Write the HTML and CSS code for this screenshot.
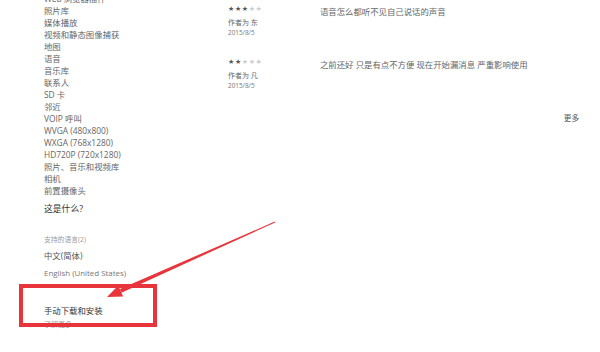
FILE: index.html
```html
<!DOCTYPE html>
<html lang="zh-CN">
<head>
<meta charset="utf-8">
<title>应用详情</title>
<link rel="stylesheet" href="styles.css">
</head>
<body>
<div class="page">
  <div class="left">
    <ul class="caps">
      <li>Web 浏览器插件</li>
      <li>照片库</li>
      <li>媒体播放</li>
      <li>视频和静态图像捕获</li>
      <li>地图</li>
      <li>语音</li>
      <li>音乐库</li>
      <li>联系人</li>
      <li>SD 卡</li>
      <li>邻近</li>
      <li>VOIP 呼叫</li>
      <li>WVGA (480x800)</li>
      <li>WXGA (768x1280)</li>
      <li>HD720P (720x1280)</li>
      <li>照片、音乐和视频库</li>
      <li>相机</li>
      <li>前置摄像头</li>
    </ul>
    <p class="what">这是什么?</p>
    <p class="lang-title">支持的语言(2)</p>
    <p class="lang">中文(简体)</p>
    <p class="lang en">English (United States)</p>
    <p class="manual">手动下载和安装</p>
    <p class="learn">了解更多</p>
  </div>
  <div class="reviews">
    <div class="review">
      <div class="meta">
        <div class="stars"><span class="on">★★★</span><span class="off">★★</span></div>
        <div class="author">作者为 东</div>
        <div class="date">2015/8/5</div>
      </div>
      <p class="text">语音怎么都听不见自己说话的声音</p>
    </div>
    <div class="review">
      <div class="meta">
        <div class="stars"><span class="on">★★</span><span class="off">★★★</span></div>
        <div class="author">作者为 凡</div>
        <div class="date">2015/8/5</div>
      </div>
      <p class="text">之前还好 只是有点不方便 现在开始漏消息 严重影响使用</p>
    </div>
    <div class="more">更多</div>
  </div>
</div>
<svg class="annot" width="600" height="352" viewBox="0 0 600 352">
  <polygon points="275.2,222.4 274.8,221.6 119.9,289.1 121.5,292.7" fill="#e8353b"/>
  <polygon points="107,297 118.3,285.4 123.1,296.4" fill="#e8353b"/>
</svg>
<div class="box"></div>
</body>
</html>
```
FILE: styles.css
```css
html, body {
  margin: 0;
  padding: 0;
  background: #fff;
}
body {
  width: 600px;
  height: 352px;
  overflow: hidden;
  position: relative;
  font-family: "Open Sans", "Noto Sans CJK SC", sans-serif;
  color: #666;
}
.page {
  display: flex;
  align-items: flex-start;
}
.left {
  width: 184px;
  padding-left: 44px;
  margin-top: -7.3px;
}
.caps {
  list-style: none;
  margin: 0;
  padding: 0;
}
.caps li {
  font-size: 8.4px;
  line-height: 12px;
  white-space: nowrap;
}
.left p {
  margin: 0;
  white-space: nowrap;
}
.what {
  font-size: 8.8px;
  line-height: 12px;
  margin-top: 6.7px !important;
  color: #333;
}
.lang-title {
  font-size: 6.8px;
  line-height: 12px;
  margin-top: 18.5px !important;
  color: #999;
}
.lang {
  font-size: 8.4px;
  line-height: 12px;
  margin-top: 4.5px !important;
  color: #555;
}
.lang.en {
  font-size: 7.9px;
  margin-top: 4.7px !important;
  color: #777;
}
.manual {
  font-size: 8.4px;
  line-height: 12px;
  margin-top: 26px !important;
  color: #333;
}
.learn {
  font-size: 7px;
  line-height: 12px;
  margin-top: 1.8px !important;
  color: #999;
}
.reviews {
  flex: 1;
  padding-right: 21px;
}
.review {
  display: flex;
  height: 53.3px;
}
.meta {
  width: 92px;
  flex: none;
}
.stars {
  font-family: "DejaVu Sans", sans-serif;
  font-size: 7px;
  line-height: 10px;
  margin-top: 4px;
  letter-spacing: 0.6px;
}
.stars .on { color: #555; }
.stars .off { color: #ccc; }
.author {
  font-size: 7px;
  line-height: 11px;
  margin-top: 3px;
  color: #666;
}
.date {
  font-size: 6.4px;
  line-height: 10px;
  color: #777;
}
.text {
  margin: 6px 0 0;
  font-size: 8.4px;
  line-height: 12px;
  color: #666;
  white-space: nowrap;
}
.more {
  text-align: right;
  font-size: 7.6px;
  line-height: 12px;
  margin-top: 5.4px;
  color: #555;
}
.annot {
  position: absolute;
  left: 0;
  top: 0;
  pointer-events: none;
}
.box {
  position: absolute;
  left: 19px;
  top: 284px;
  width: 130px;
  height: 35px;
  border: 4px solid #e8353b;
}
```
